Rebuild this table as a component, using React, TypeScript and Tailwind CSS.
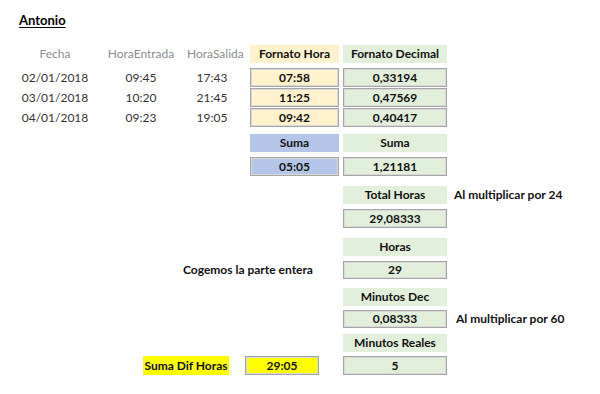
import React from "react";

type Tone = "yellow" | "green" | "blue" | "bright";

const fills: Record<Tone, string> = {
  yellow: "bg-[#fff2cc]",
  green: "bg-[#e2efda]",
  blue: "bg-[#b4c6e7]",
  bright: "bg-[#ffff00]",
};

// Header cell: filled, no border
function Head({ tone, children, w }: { tone: Tone; children: React.ReactNode; w: string }) {
  return (
    <div className={`${fills[tone]} ${w} h-[18px] flex items-center justify-center font-bold text-[12px] text-[#111]`}>
      {children}
    </div>
  );
}

// Value cell: filled with a grey border
function Val({ tone, children, w, h = "h-[19px]" }: { tone: Tone; children: React.ReactNode; w: string; h?: string }) {
  return (
    <div
      className={`${fills[tone]} ${w} ${h} border border-[#a6a6a6] shadow-[inset_0_0_0_1px_#d9d9d9] flex items-center justify-center font-bold text-[12px] text-[#111]`}
    >
      {children}
    </div>
  );
}

const rows = [
  { fecha: "02/01/2018", entrada: "09:45", salida: "17:43", hora: "07:58", dec: "0,33194" },
  { fecha: "03/01/2018", entrada: "10:20", salida: "21:45", hora: "11:25", dec: "0,47569" },
  { fecha: "04/01/2018", entrada: "09:23", salida: "19:05", hora: "09:42", dec: "0,40417" },
];

const HORA_W = "w-[89px]";
const DEC_W = "w-[104px]";

export default function App() {
  return (
    <div
      className="w-[600px] h-[394px] bg-white text-[#222] overflow-hidden"
      style={{ fontFamily: "Lato, 'Open Sans', sans-serif" }}
    >
      <div className="pl-[19px] pt-[7px] h-[45px]">
        <span className="font-bold text-[13px] underline underline-offset-2 text-black">Antonio</span>
      </div>

      {/* column headings */}
      <div className="flex items-center h-[18px]">
        <div className="flex w-[250px] text-[12px] text-[#8c8c8c]">
          <div className="w-[80px] ml-[15px] text-center">Fecha</div>
          <div className="w-[92px] text-center">HoraEntrada</div>
          <div className="w-[50px] text-center">HoraSalida</div>
        </div>
        <Head tone="yellow" w={HORA_W}>Fornato Hora</Head>
        <div className="w-[4px]" />
        <Head tone="green" w={DEC_W}>Fornato Decimal</Head>
      </div>

      {/* daily entries */}
      <div className="mt-[5px] flex flex-col gap-[1px]">
        {rows.map((r) => (
          <div key={r.fecha} className="flex items-center">
            <div className="flex w-[250px] text-[12px] text-[#333]">
              <div className="w-[80px] ml-[15px] text-center">{r.fecha}</div>
              <div className="w-[92px] text-center">{r.entrada}</div>
              <div className="w-[50px] text-center">{r.salida}</div>
            </div>
            <Val tone="yellow" w={HORA_W}>{r.hora}</Val>
            <div className="w-[4px]" />
            <Val tone="green" w={DEC_W}>{r.dec}</Val>
          </div>
        ))}
      </div>

      {/* totals */}
      <div className="mt-[7px] flex pl-[250px]">
        <Head tone="blue" w={HORA_W}>Suma</Head>
        <div className="w-[4px]" />
        <Head tone="green" w={DEC_W}>Suma</Head>
      </div>
      <div className="mt-[5px] flex pl-[250px]">
        <Val tone="blue" w={HORA_W}>05:05</Val>
        <div className="w-[4px]" />
        <Val tone="green" w={DEC_W}>1,21181</Val>
      </div>

      <div className="mt-[10px] flex items-center pl-[343px]">
        <Head tone="green" w={DEC_W}>Total Horas</Head>
        <span className="ml-[7px] font-bold text-[12px] text-[#111]">Al multiplicar por 24</span>
      </div>
      <div className="mt-[5px] flex pl-[343px]">
        <Val tone="green" w={DEC_W}>29,08333</Val>
      </div>

      <div className="mt-[10px] flex pl-[343px]">
        <Head tone="green" w={DEC_W}>Horas</Head>
      </div>
      <div className="mt-[5px] flex items-center">
        <div className="w-[343px] pl-[183px] font-bold text-[12px] text-[#111]">Cogemos la parte entera</div>
        <Val tone="green" w={DEC_W} h="h-[18px]">29</Val>
      </div>

      <div className="mt-[9px] flex pl-[343px]">
        <Head tone="green" w={DEC_W}>Minutos Dec</Head>
      </div>
      <div className="mt-[4px] flex items-center pl-[343px]">
        <Val tone="green" w={DEC_W} h="h-[18px]">0,08333</Val>
        <span className="ml-[9px] font-bold text-[12px] text-[#111]">Al multiplicar por 60</span>
      </div>

      <div className="mt-[6px] flex pl-[343px]">
        <Head tone="green" w={DEC_W}>Minutos Reales</Head>
      </div>

      <div className="mt-[4px] flex items-center">
        <div className="ml-[143px] w-[86px] h-[19px] bg-[#ffff00] flex items-center justify-center font-bold text-[12px] text-[#111]">
          Suma Dif Horas
        </div>
        <div className="ml-[16px]">
          <Val tone="bright" w="w-[74px]">29:05</Val>
        </div>
        <div className="ml-[24px]">
          <Val tone="green" w={DEC_W}>5</Val>
        </div>
      </div>
    </div>
  );
}
